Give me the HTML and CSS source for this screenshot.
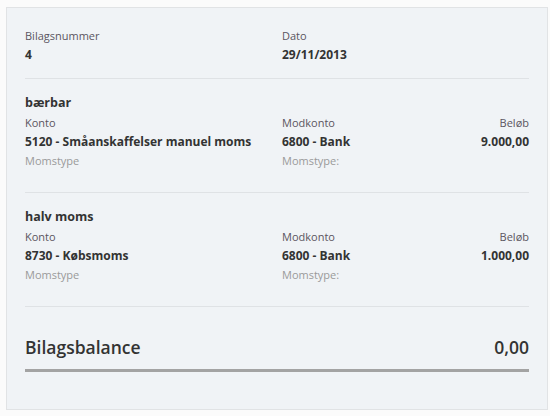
FILE: index.html
```html
<!DOCTYPE html>
<html lang="da">
<head>
<meta charset="utf-8">
<link rel="stylesheet" href="styles.css">
</head>
<body>
<div class="card">
  <div class="grid head">
    <div>
      <div class="label">Bilagsnummer</div>
      <div class="value">4</div>
    </div>
    <div>
      <div class="label">Dato</div>
      <div class="value">29/11/2013</div>
    </div>
  </div>
  <div class="entry">
    <div class="title">bærbar</div>
    <div class="grid three">
      <div>
        <div class="label">Konto</div>
        <div class="value">5120 - Småanskaffelser manuel moms</div>
        <div class="label muted">Momstype</div>
      </div>
      <div>
        <div class="label">Modkonto</div>
        <div class="value">6800 - Bank</div>
        <div class="label muted">Momstype:</div>
      </div>
      <div class="right">
        <div class="label">Beløb</div>
        <div class="value">9.000,00</div>
      </div>
    </div>
  </div>
  <div class="entry">
    <div class="title">halv moms</div>
    <div class="grid three">
      <div>
        <div class="label">Konto</div>
        <div class="value">8730 - Købsmoms</div>
        <div class="label muted">Momstype</div>
      </div>
      <div>
        <div class="label">Modkonto</div>
        <div class="value">6800 - Bank</div>
        <div class="label muted">Momstype:</div>
      </div>
      <div class="right">
        <div class="label">Beløb</div>
        <div class="value">1.000,00</div>
      </div>
    </div>
  </div>
  <div class="balance">
    <span>Bilagsbalance</span>
    <span>0,00</span>
  </div>
</div>
</body>
</html>
```
FILE: styles.css
```css
html, body {
  margin: 0;
  padding: 0;
  background: #fbfbfb;
}
body {
  padding: 7px 2px 6px 6px;
  font-family: "Open Sans", "Liberation Sans", sans-serif;
  color: #333;
}
.card {
  border: 1px solid #e1e3e5;
  background: #f0f3f6;
  padding: 18px 18px 36px 18px;
  height: 347px;
}
.grid {
  display: grid;
  grid-template-columns: 257px 1fr;
}
.grid.three {
  grid-template-columns: 257px 1fr auto;
}
.right {
  text-align: right;
}
.head {
  padding-bottom: 14px;
  border-bottom: 1px solid #dfe2e5;
}
.label {
  font-size: 11px;
  line-height: 19px;
  color: #5b5560;
}
.label.muted {
  color: #9a9a9a;
}
.value {
  font-size: 12px;
  font-weight: 700;
  line-height: 19px;
  color: #333;
}
.entry {
  padding: 14px 0 22px;
  border-bottom: 1px solid #dfe2e5;
}
.title {
  font-size: 12.5px;
  font-weight: 700;
  line-height: 20px;
  color: #333;
}
.balance {
  display: flex;
  justify-content: space-between;
  align-items: center;
  margin-top: 28px;
  padding-bottom: 10px;
  border-bottom: 3px solid #a3a3a3;
  font-size: 17.5px;
  font-weight: 600;
  line-height: 24px;
  color: #333;
}
```
